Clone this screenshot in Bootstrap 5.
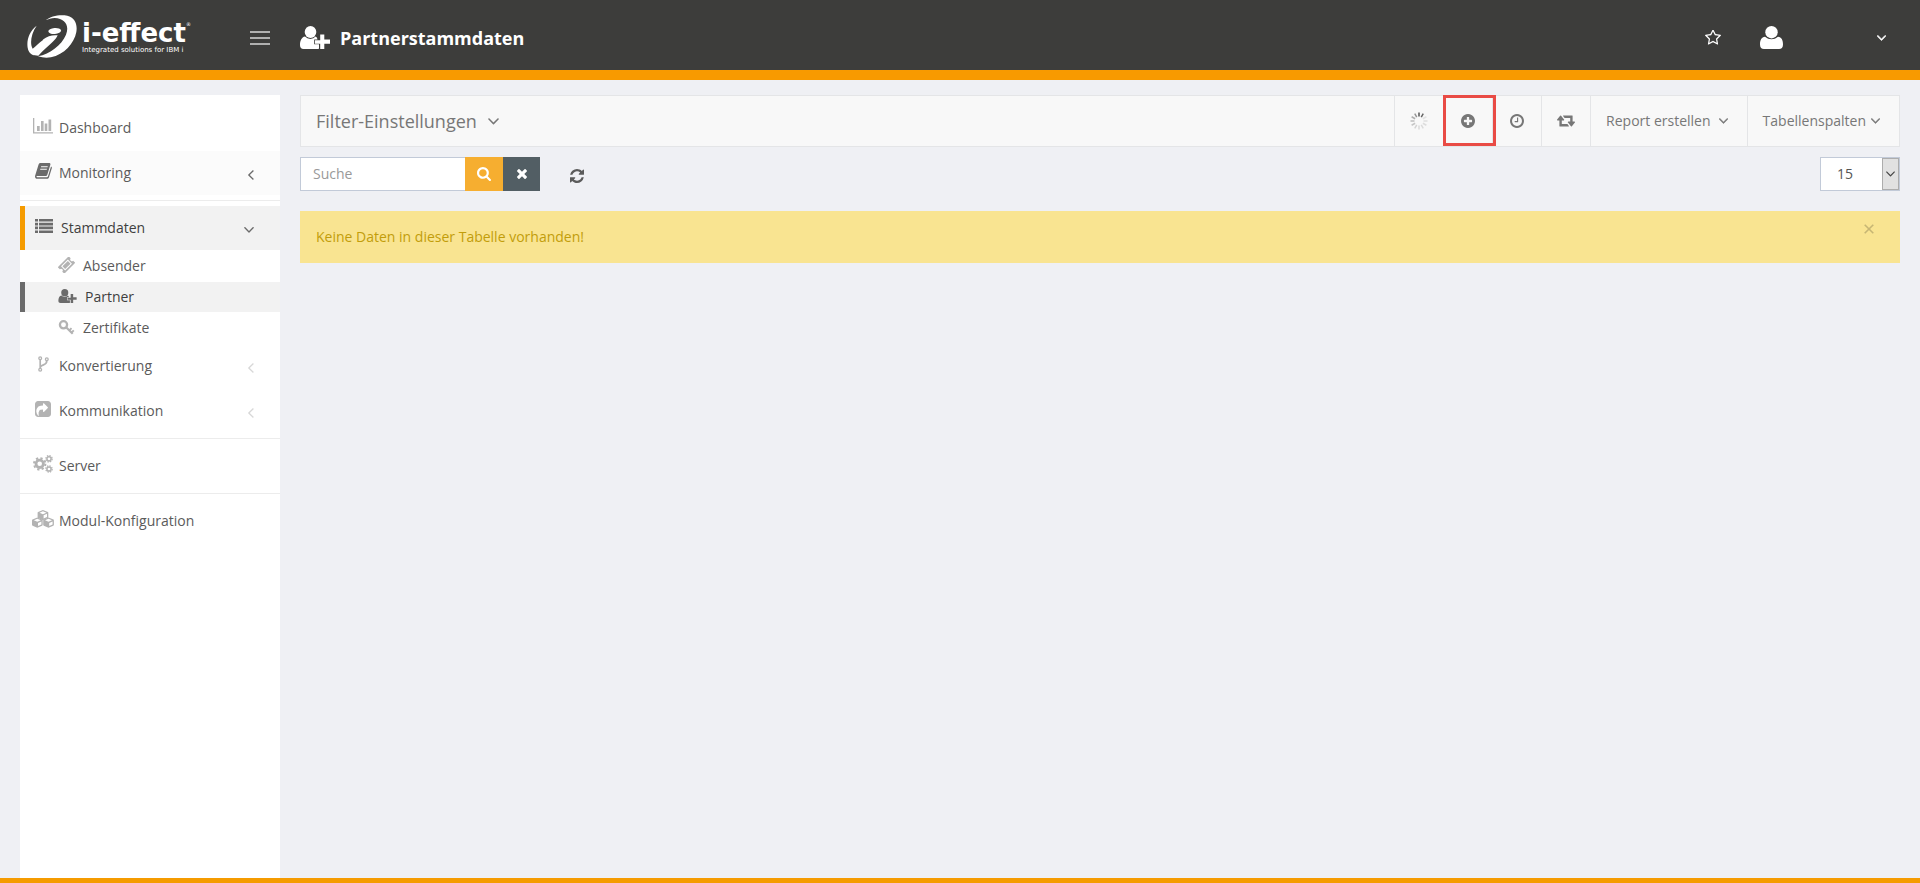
<!DOCTYPE html>
<html lang="de">
<head>
<meta charset="utf-8">
<meta name="viewport" content="width=device-width, initial-scale=1">
<title>Partnerstammdaten</title>
<link href="https://cdn.jsdelivr.net/npm/bootstrap@5.3.0/dist/css/bootstrap.min.css" rel="stylesheet">
<style>
  body { font-family: "Open Sans", "Noto Sans", sans-serif; font-size: 14px; line-height: 20px; color: #5b5b5b; background: #eff0f4; }
  svg { display: block; fill: currentColor; flex: none; }
  button { font: inherit; color: inherit; background: none; border: 0; padding: 0; }
  .topbar { height: 80px; background: #3d3d3b; border-bottom: 10px solid #f89a00; color: #fff; }
  .brand { width: 250px; padding: 2px 10px 0 27px; gap: 5px; color: #fff; }
  .brand:hover { color: #fff; }
  .wordmark { font: bold 26px/27px "DejaVu Sans", sans-serif; }
  .wordmark sup { font-size: 5px; top: -16px; font-weight: normal; }
  .claim { font: 7px/6px "DejaVu Sans", sans-serif; white-space: nowrap; }
  .headbar { padding: 5px 24px 0 0; }
  .burger { width: 20px; margin-right: 30px; }
  .burger span { display: block; height: 2px; margin-bottom: 4px; background: #b0b0af; }
  .burger span:last-child { margin-bottom: 0; }
  .page-title { font-size: 18px; line-height: 24px; font-weight: 700; margin: 0 0 0 10px; }
  .usermenu { width: 126px; margin: 0 10px 0 39px; }
  .sidebar { width: 260px; background: #fff; padding-top: 11px; }
  .entry { height: 44px; margin-bottom: 1px; padding: 0 26px 0 12px; gap: 5px; color: #5b5b5b; text-decoration: none; }
  .entry .glyph { width: 22px; height: 20px; margin-bottom: 4px; color: #b3b3b3; }
  .entry .arrow { margin: 3px 0 0 auto; color: #d8d8d8; }
  .entry.hovered { background: #fbfbfb; }
  .entry.hovered .glyph, .entry.hovered .arrow, .entry.current .glyph, .entry.current .arrow { color: #6b6b6b; }
  .entry.current { background: #f2f2f2; border-left: 5px solid #f59b00; padding-left: 8px; gap: 6px; color: #3f3f3f; }
  .rule { height: 1px; margin: 5px 0; background: #ececec; }
  .subentry { height: 30px; margin-bottom: 1px; padding-left: 38px; gap: 6px; color: #5b5b5b; text-decoration: none; }
  .subentry .glyph { width: 19px; color: #b3b3b3; margin-bottom: 2px; }
  .subentry.current { background: #f2f2f2; border-left: 5px solid #6b6b6b; padding-left: 33px; gap: 8px; color: #3f3f3f; }
  .subentry.current .glyph { color: #6b6b6b; }
  .toolbar { height: 52px; background: #f8f8f8; border: 1px solid #e4e5e7; color: #777; }
  .toolbar button + button { border-left: 1px solid #e4e5e7; }
  .filter { padding-left: 15px; font-size: 18px; gap: 11px; }
  .tool { width: 49px; }
  .tool-first { border-left: 1px solid #e4e5e7; }
  .tool-text { padding: 0 19px 0 15px; gap: 8px; }
  .tool-tight { gap: 5px; }
  .marked { position: relative; }
  .marked::after { content: ""; position: absolute; z-index: 1; inset: -1px -4px 0 -1px; border: 3px solid #e94b45; }
  .search-row { margin-top: 10px; }
  .field { width: 165px; height: 34px; border: 1px solid #c2cad8; border-right: 0; border-radius: 0; padding: 0 12px 2px; color: #555; background: #fff; }
  .field::placeholder { color: #999; opacity: 1; }
  .go { width: 38px; background: #f6ae30; color: #fff; }
  .wipe { width: 37px; background: #525e64; color: #fff; }
  .reload { margin: 3px 0 0 30px; color: #5b5b5b; }
  .pagesize select { width: 80px; height: 34px; border: 1px solid #c2cad8; border-radius: 0; padding: 0 16px; appearance: none; background: #fff; color: #555; }
  .pagesize span { top: 1px; right: 1px; bottom: 1px; width: 17px; background: #e1e1e1; border: 1px solid #adadad; color: #444; pointer-events: none; }
  .notice { height: 52px; margin: 20px 0 0; padding: 0 26px 0 16px; border: 0; border-radius: 0; background: #f9e491; color: #c29d0b; }
  .notice button { color: #c7b674; margin-bottom: 16px; }
  .body-row { padding: 15px 20px 0; gap: 20px; }
  .bottombar { height: 5px; background: #f59b00; }
</style>
</head>
<body class="d-flex flex-column min-vh-100">
<svg class="d-none" xmlns="http://www.w3.org/2000/svg">
  <symbol id="down" viewBox="387 666 1018 580"><path d="M1395 736q0 13-10 23l-466 466q-10 10-23 10t-23-10l-466-466q-10-10-10-23t10-23l50-50q10-10 23-10t23 10l393 393 393-393q10-10 23-10t23 10l50 50q10 10 10 23z"/></symbol>
  <symbol id="left" viewBox="634 450 580 1018"><path d="M1203 544q0 13-10 23l-393 393 393 393q10 10 10 23t-10 23l-50 50q-10 10-23 10t-23-10l-466-466q-10-10-10-23t10-23l466-466q10-10 23-10t23 10l50 50q10 10 10 23z"/></symbol>
  <symbol id="userplus" viewBox="0 0 30 23"><ellipse cx="10.500" cy="6" rx="5.800" ry="6"/><path d="M5 10.600C1.500 11.200 0 15 0 19.300C0 21.700 1.300 23 3.500 23H17.500Q18.500 23 19 22.500V18.300H14.200V13.600H17.500C17.200 12 16.600 11 15.600 10.600Q13.500 12.900 10.300 12.900T5 10.600Z"/><path d="M20.200 8.400H24.300V13.600H30V17.700H24.300V23H20.200V17.700H15V14.300H20.200Z"/></symbol>
</svg>

<header class="topbar d-flex align-items-center">
  <a href="#" class="brand d-flex align-items-center text-decoration-none flex-shrink-0">
    <svg width="50" height="43" viewBox="79 43 150 129" aria-hidden="true">
      <path d="M135 59C150 46 176 41 200 45C222 50 231 69 227 94C221 128 190 162 151 170C137 172 124 171 112 167C148 160 183 133 196 102C207 75 193 53 162 52C152 52 143 55 135 59Z"/>
      <path d="M108 75C87 91 77 117 81 141C82 151 88 159 98 164C120 144 143 124 151 108Q139 113 128 117C114 127 104 138 96 144C87 129 91 99 108 75Z"/>
      <path d="M126 117Q148 101 171 104C166 119 144 132 113 165L97 163C104 151 127 131 137 119Z"/>
      <ellipse cx="162" cy="91" rx="19" ry="9" transform="rotate(-5 162 91)"/>
    </svg>
    <span>
      <span class="wordmark d-block text-nowrap">i-effect<sup>®</sup></span>
      <span class="claim d-block">Integrated solutions for IBM i</span>
    </span>
  </a>
  <div class="headbar d-flex align-items-center flex-grow-1">
    <button type="button" class="burger" aria-label="Menü"><span></span><span></span><span></span></button>
    <svg width="30" height="23" aria-hidden="true"><use href="#userplus"/></svg>
    <h1 class="page-title">Partnerstammdaten</h1>
    <button type="button" class="ms-auto" aria-label="Favoriten"><svg width="16" height="15" viewBox="64 100 1664 1560"><path d="M1201 1004l306-297-422-62-189-382-189 382-422 62 306 297-73 421 378-199 377 199zm527-357q0 22-26 48l-363 354 86 500q1 7 1 20 0 50-41 50-19 0-40-12l-449-236-449 236q-22 12-40 12-21 0-31.500-14.500t-10.500-35.500q0-6 2-20l86-500-364-354q-25-27-25-48 0-37 56-46l502-73 225-455q19-41 49-41t49 41l225 455 502 73q56 9 56 46z"/></svg></button>
    <button type="button" class="usermenu d-flex align-items-center justify-content-between" aria-label="Benutzer">
      <svg width="23" height="23" viewBox="0 0 23 23"><ellipse cx="11.500" cy="6.200" rx="6.200" ry="6.200"/><path d="M5 10.800C1.500 11.300 0 14 0 18.500C0 21.500 1.500 23 4 23H19C21.500 23 23 21.500 23 18.500C23 14 21.500 11.300 18 10.800Q15 13.300 11.500 13.300T5 10.800Z"/></svg>
      <svg width="9" height="6"><use href="#down" stroke="#fff" stroke-width="60"/></svg>
    </button>
  </div>
</header>

<div class="body-row d-flex flex-grow-1">
  <nav class="sidebar flex-shrink-0" aria-label="Hauptmenü">
    <a href="#" class="entry d-flex align-items-center">
      <span class="glyph d-flex align-items-center justify-content-center"><svg width="20" height="16" viewBox="0 0 20 16"><path d="M0 0H1.300V14.300H20V15.600H0Z M4 8H6.700V13H4Z M8 3H10.600V13H8Z M11.700 5.400H14.300V13H11.700Z M15.500 1.500H18.200V13H15.500Z"/></svg></span>Dashboard</a>
    <a href="#" class="entry hovered d-flex align-items-center">
      <span class="glyph d-flex align-items-center justify-content-center"><svg width="17" height="16" viewBox="0 0 17 16"><path fill-rule="evenodd" d="M5.500 0H14C15.200 0 15.700 .8 15.300 2L12.300 11.800C12 12.700 11.400 13 10.500 13H2C1.200 13 1.300 14.200 2.300 14.200H11.600C12.300 14.200 12.700 14 13 13.200L16 3.500Q17.200 4 16.800 5.300L14 14.200C13.700 15.300 12.900 15.800 11.900 15.800H2.300C.7 15.800-.3 14.300 .1 12.800L3.500 1.800C3.900 .6 4.500 0 5.500 0ZM6.200 3.200L5.900 4.300H12.500L12.800 3.200ZM5.400 5.700L5.100 6.800H11.700L12 5.700Z"/></svg></span>Monitoring
      <svg class="arrow" width="6" height="10"><use href="#left"/></svg></a>
    <div class="rule"></div>
    <a href="#" class="entry current d-flex align-items-center" aria-expanded="true">
      <span class="glyph d-flex align-items-center justify-content-center"><svg width="18" height="14" viewBox="0 0 18 14"><path d="M0 0H3V2.600H0ZM4 0H18V2.600H4ZM0 3.800H3V6.400H0ZM4 3.800H18V6.400H4ZM0 7.600H3V10.200H0ZM4 7.600H18V10.200H4ZM0 11.400H3V14H0ZM4 11.400H18V14H4Z"/></svg></span>Stammdaten
      <svg class="arrow" width="10" height="6"><use href="#down"/></svg></a>
    <a href="#" class="subentry d-flex align-items-center">
      <span class="glyph d-flex"><svg width="17" height="16" viewBox="0 0 16 16"><g transform="rotate(-45 8 8)"><path fill-rule="evenodd" d="M.3 3.400H15.700V6.300A1.700 1.700 0 0 0 15.700 9.700V12.600H.3V9.700A1.700 1.700 0 0 0 .3 6.300ZM3.200 5.100V10.900H12.800V5.100ZM4.200 6.100H11.800V9.900H4.200Z"/></g></svg></span>Absender</a>
    <a href="#" class="subentry current d-flex align-items-center">
      <span class="glyph d-flex"><svg width="19" height="14"><use href="#userplus"/></svg></span>Partner</a>
    <a href="#" class="subentry d-flex align-items-center">
      <span class="glyph d-flex"><svg width="17" height="15" viewBox="0 0 16 15"><g fill="none" stroke="currentColor"><circle cx="5" cy="4.800" r="3.600" stroke-width="2.300"/><path d="M7.600 7.200L14.200 13.800" stroke-width="2.200"/><path d="M10.700 10.600L13 8.200M12.900 12.700L15.300 10.300" stroke-width="1.900"/></g></svg></span>Zertifikate</a>
    <a href="#" class="entry d-flex align-items-center">
      <span class="glyph d-flex align-items-center justify-content-center"><svg width="11" height="16" viewBox="0 0 11 16"><g fill="none" stroke="currentColor" stroke-width="1.300"><circle cx="2.200" cy="2.200" r="1.400"/><circle cx="2.200" cy="13.700" r="1.400"/><circle cx="8.800" cy="3.200" r="1.400"/><path d="M2.200 3.800V12M8.800 4.800C8.800 8.200 6.800 8.400 4.800 9.100Q2.500 9.900 2.300 11.500" stroke-width="1.700"/></g></svg></span>Konvertierung
      <svg class="arrow" width="6" height="10"><use href="#left"/></svg></a>
    <a href="#" class="entry d-flex align-items-center">
      <span class="glyph d-flex align-items-center justify-content-center"><svg width="16" height="16" viewBox="128 166 1536 1536"><path fill-rule="evenodd" d="M1005 1197l352-352q19-19 19-45t-19-45l-352-352q-30-31-69-14-40 17-40 59v160q-119 0-216 19.500t-162.500 51-114 79-76.500 95.500-44.500 109-21.500 111.500-5 110.500q0 181 167 404 11 12 25 12 7 0 13-3 22-9 19-33-44-354 62-473 46-52 130-75.500t224-23.500v160q0 42 40 59 12 5 24 5 26 0 45-19zm659-743v960q0 119-84.500 203.500t-203.500 84.500h-960q-119 0-203.500-84.500t-84.500-203.500v-960q0-119 84.500-203.500t203.500-84.500h960q119 0 203.500 84.500t84.500 203.500z"/></svg></span>Kommunikation
      <svg class="arrow" width="6" height="10"><use href="#left"/></svg></a>
    <div class="rule"></div>
    <a href="#" class="entry d-flex align-items-center">
      <span class="glyph d-flex align-items-center justify-content-center"><svg width="20" height="18" viewBox="0 0 20 18"><g fill="none" stroke="currentColor"><circle cx="6.700" cy="8.800" r="3.700" stroke-width="2.800"/><circle cx="6.700" cy="8.800" r="5.700" stroke-width="2" stroke-dasharray="2.240 2.240"/><circle cx="16" cy="3.800" r="2.100" stroke-width="1.500"/><circle cx="16" cy="3.800" r="3.200" stroke-width="1.200" stroke-dasharray="1.440 1.070"/><circle cx="16" cy="14" r="2.100" stroke-width="1.500"/><circle cx="16" cy="14" r="3.200" stroke-width="1.200" stroke-dasharray="1.440 1.070"/></g></svg></span>Server</a>
    <div class="rule"></div>
    <a href="#" class="entry d-flex align-items-center">
      <span class="glyph d-flex align-items-center justify-content-center"><svg width="22" height="18" viewBox="0 0 22 18"><defs><path id="cube" fill-rule="evenodd" d="M5.300 0L10.300 2Q10.700 2.300 10.700 2.800V7.200Q10.700 7.800 10.100 8.100L5.300 10.200L.6 8.100Q0 7.800 0 7.200V2.800Q0 2.300 .5 2ZM5.300 1.200L1.900 2.700L5.300 4.200L8.800 2.700ZM6 5.300V8.500L9.400 7V3.800Z"/></defs><use href="#cube" x="5.600"/><use href="#cube" y="7.600"/><use href="#cube" x="11.200" y="7.600"/></svg></span>Modul-Konfiguration</a>
  </nav>

  <main class="flex-grow-1">
    <div class="toolbar d-flex">
      <button type="button" class="filter d-flex align-items-center me-auto">Filter-Einstellungen <svg width="11" height="7"><use href="#down"/></svg></button>
      <div class="d-flex">
        <button type="button" class="tool tool-first d-flex align-items-center justify-content-center" aria-label="Laden"><svg width="18" height="18" viewBox="-9 -9 18 18"><g stroke="#555" stroke-width="1.500"><path d="M0-4.500V-8.500"/><path d="M0-4.500V-8.500" transform="rotate(30)" opacity=".9"/><path d="M0-4.500V-8.500" transform="rotate(60)" opacity=".12"/><path d="M0-4.500V-8.500" transform="rotate(90)" opacity=".15"/><path d="M0-4.500V-8.500" transform="rotate(120)" opacity=".16"/><path d="M0-4.500V-8.500" transform="rotate(150)" opacity=".17"/><path d="M0-4.500V-8.500" transform="rotate(180)" opacity=".18"/><path d="M0-4.500V-8.500" transform="rotate(210)" opacity=".22"/><path d="M0-4.500V-8.500" transform="rotate(240)" opacity=".3"/><path d="M0-4.500V-8.500" transform="rotate(270)" opacity=".35"/><path d="M0-4.500V-8.500" transform="rotate(300)" opacity=".45"/><path d="M0-4.500V-8.500" transform="rotate(330)" opacity=".6"/></g></svg></button>
        <button type="button" class="tool marked d-flex align-items-center justify-content-center" aria-label="Hinzufügen"><svg width="14" height="14" viewBox="128 128 1536 1536"><path d="M1344 960v-128q0-26-19-45t-45-19h-256v-256q0-26-19-45t-45-19h-128q-26 0-45 19t-19 45v256h-256q-26 0-45 19t-19 45v128q0 26 19 45t45 19h256v256q0 26 19 45t45 19h128q26 0 45-19t19-45v-256h256q26 0 45-19t19-45zm320-64q0 209-103 385.500t-279.500 279.500-385.500 103-385.500-103-279.500-279.500-103-385.500 103-385.500 279.500-279.500 385.500-103 385.500 103 279.500 279.500 103 385.500z"/></svg></button>
        <button type="button" class="tool d-flex align-items-center justify-content-center" aria-label="Verlauf"><svg width="14" height="14" viewBox="128 128 1536 1536"><path d="M1024 544v448q0 14-9 23t-23 9h-320q-14 0-23-9t-9-23v-64q0-14 9-23t23-9h224v-352q0-14 9-23t23-9h64q14 0 23 9t9 23zm416 352q0-148-73-273t-198-198-273-73-273 73-198 198-73 273 73 273 198 198 273 73 273-73 198-198 73-273zm224 0q0 209-103 385.500t-279.500 279.500-385.500 103-385.500-103-279.500-279.500-103-385.500 103-385.500 279.500-279.500 385.500-103 385.500 103 279.500 279.500 103 385.500z"/></svg></button>
        <button type="button" class="tool d-flex align-items-center justify-content-center" aria-label="Umschalten"><svg width="18" height="12" viewBox="64 384 1920 1152"><path d="M1344 1504q0 13-9.500 22.500t-22.500 9.500h-960q-8 0-13.500-2t-9-7-5.500-8-3-11.500-1-11.500v-600h-192q-26 0-45-19t-19-45q0-24 15-41l320-384q19-22 49-22t49 22l320 384q15 17 15 41 0 26-19 45t-45 19h-192v384h576q16 0 25 11l160 192q7 10 7 21zm640-416q0 24-15 41l-320 384q-20 23-49 23t-49-23l-320-384q-15-17-15-41 0-26 19-45t45-19h192v-384h-576q-16 0-25-12l-160-192q-7-9-7-20 0-13 9.500-22.500t22.500-9.500h960q8 0 13.500 2t9 7 5.500 8 3 11.500 1 11.500v600h192q26 0 45 19t19 45z"/></svg></button>
        <button type="button" class="tool-text d-flex align-items-center">Report erstellen <svg width="9" height="6"><use href="#down" stroke="#777" stroke-width="40"/></svg></button>
        <button type="button" class="tool-text tool-tight d-flex align-items-center">Tabellenspalten <svg width="9" height="6"><use href="#down" stroke="#777" stroke-width="40"/></svg></button>
      </div>
    </div>

    <div class="search-row d-flex">
      <form class="d-flex" onsubmit="return false">
        <input type="text" class="field" placeholder="Suche" aria-label="Suche">
        <button type="submit" class="go d-flex align-items-center justify-content-center" aria-label="Suchen"><svg width="14" height="14" viewBox="64 128 1664 1664"><path d="M1216 832q0-185-131.500-316.500t-316.500-131.500-316.500 131.500-131.500 316.500 131.500 316.500 316.500 131.500 316.500-131.500 131.500-316.500zm512 832q0 52-38 90t-90 38q-54 0-90-38l-343-342q-179 124-399 124-143 0-273.500-55.500t-225-150-150-225-55.500-273.500 55.500-273.500 150-225 225-150 273.500-55.500 273.500 55.500 225 150 150 225 55.500 273.500q0 220-124 399l343 343q37 37 37 90z"/></svg></button>
        <button type="reset" class="wipe d-flex align-items-center justify-content-center" aria-label="Zurücksetzen"><svg width="10" height="10" viewBox="302 366 1188 1188"><path d="M1490 1322q0 40-28 68l-136 136q-28 28-68 28t-68-28l-294-294-294 294q-28 28-68 28t-68-28l-136-136q-28-28-28-68t28-68l294-294-294-294q-28-28-28-68t28-68l136-136q28-28 68-28t68 28l294 294 294-294q28-28 68-28t68 28l136 136q28 28 28 68t-28 68l-294 294 294 294q28 28 28 68z"/></svg></button>
      </form>
      <button type="button" class="reload" aria-label="Aktualisieren"><svg width="14" height="14" viewBox="128 128 1536 1536"><path d="M1639 1056q0 5-1 7-64 268-268 434.500t-478 166.500q-146 0-282.500-55t-243.500-157l-129 129q-19 19-45 19t-45-19-19-45v-448q0-26 19-45t45-19h448q26 0 45 19t19 45-19 45l-137 137q71 66 161 102t187 36q134 0 250-65t186-179q11-17 53-117 8-23 30-23h192q13 0 22.500 9.500t9.500 22.500zm25-800v448q0 26-19 45t-45 19h-448q-26 0-45-19t-19-45 19-45l138-138q-148-137-349-137-134 0-250 65t-186 179q-11 17-53 117-8 23-30 23h-199q-13 0-22.500-9.500t-9.500-22.500v-7q65-268 270-434.500t480-166.500q146 0 284 55.500t245 156.500l130-129q19-19 45-19t45 19 19 45z"/></svg></button>
      <div class="pagesize position-relative ms-auto">
        <select aria-label="Einträge pro Seite"><option>15</option><option>30</option><option>50</option></select>
        <span class="position-absolute d-flex align-items-center justify-content-center"><svg width="9" height="6"><use href="#down"/></svg></span>
      </div>
    </div>

    <div class="notice alert d-flex align-items-center justify-content-between" role="alert">
      Keine Daten in dieser Tabelle vorhanden!
      <button type="button" aria-label="Schließen" data-bs-dismiss="alert"><svg width="10" height="10" viewBox="0 0 10 10"><path d="M.7 .7L9.300 9.300M9.300 .7L.7 9.300" stroke="currentColor" stroke-width="1.600"/></svg></button>
    </div>
  </main>
</div>
<footer class="bottombar"></footer>
<script src="https://cdn.jsdelivr.net/npm/bootstrap@5.3.0/dist/js/bootstrap.bundle.min.js"></script>
</body>
</html>
